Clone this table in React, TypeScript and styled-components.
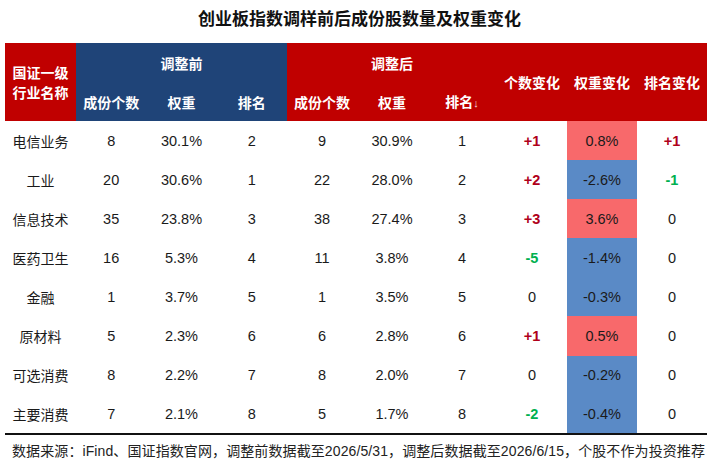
import React from "react";
import styled, { createGlobalStyle } from "styled-components";

const RED = "#C00000";
const NAVY = "#1F4478";
const UP = "#F8696B";
const DOWN = "#5A8AC6";

const rows = [
  { name: "电信业务", n0: 8, w0: "30.1%", r0: 2, n1: 9, w1: "30.9%", r1: 1, dn: "+1", dw: "0.8%", dr: "+1" },
  { name: "工业", n0: 20, w0: "30.6%", r0: 1, n1: 22, w1: "28.0%", r1: 2, dn: "+2", dw: "-2.6%", dr: "-1" },
  { name: "信息技术", n0: 35, w0: "23.8%", r0: 3, n1: 38, w1: "27.4%", r1: 3, dn: "+3", dw: "3.6%", dr: "0" },
  { name: "医药卫生", n0: 16, w0: "5.3%", r0: 4, n1: 11, w1: "3.8%", r1: 4, dn: "-5", dw: "-1.4%", dr: "0" },
  { name: "金融", n0: 1, w0: "3.7%", r0: 5, n1: 1, w1: "3.5%", r1: 5, dn: "0", dw: "-0.3%", dr: "0" },
  { name: "原材料", n0: 5, w0: "2.3%", r0: 6, n1: 6, w1: "2.8%", r1: 6, dn: "+1", dw: "0.5%", dr: "0" },
  { name: "可选消费", n0: 8, w0: "2.2%", r0: 7, n1: 8, w1: "2.0%", r1: 7, dn: "0", dw: "-0.2%", dr: "0" },
  { name: "主要消费", n0: 7, w0: "2.1%", r0: 8, n1: 5, w1: "1.7%", r1: 8, dn: "-2", dw: "-0.4%", dr: "0" },
];

const GlobalStyle = createGlobalStyle`
  html, body {
    margin: 0;
    padding: 0;
    background: #ffffff;
  }
  body {
    font-family: "Liberation Sans", "Noto Sans CJK SC", sans-serif;
    color: #1a1a1a;
  }
`;

const Page = styled.div`
  width: 719px;
  height: 463px;
  overflow: hidden;
  padding-top: 6px;
  box-sizing: border-box;
`;

const Title = styled.h1`
  margin: 0 0 13px;
  height: 24px;
  line-height: 24px;
  text-align: center;
  font-family: "Noto Sans CJK SC", sans-serif;
  font-size: 17px;
  font-weight: 700;
  color: #111;
`;

const Table = styled.table`
  margin-left: 5px;
  width: 702px;
  table-layout: fixed;
  border-collapse: collapse;
  border-bottom: 2px solid #111;
`;

const HeadCell = styled.th<{ $bg: string; $h?: number }>`
  background: ${(p) => p.$bg};
  color: #fff;
  font-family: "Noto Sans CJK SC", sans-serif;
  font-size: 14px;
  font-weight: 700;
  text-align: center;
  vertical-align: middle;
  padding: 0;
  height: ${(p) => (p.$h ? `${p.$h}px` : "auto")};
  line-height: 20px;
`;

const Arrow = styled.span`
  font-family: "Liberation Sans", sans-serif;
  font-size: 11px;
  font-weight: 400;
  opacity: 0.85;
`;

const Row = styled.tr`
  height: 39.1px;
`;

const Cell = styled.td`
  padding: 0;
  text-align: center;
  vertical-align: middle;
  font-size: 14.5px;
  color: #1a1a1a;
`;

const NameCell = styled(Cell)`
  font-family: "Noto Sans CJK SC", sans-serif;
  font-size: 14px;
`;

const DeltaCell = styled(Cell)<{ $tone: "up" | "down" | "flat" }>`
  font-weight: ${(p) => (p.$tone === "flat" ? 400 : 700)};
  color: ${(p) => (p.$tone === "up" ? "#B0001A" : p.$tone === "down" ? "#00B050" : "#1a1a1a")};
`;

const WeightCell = styled(Cell)<{ $up: boolean }>`
  background: ${(p) => (p.$up ? UP : DOWN)};
`;

const Footer = styled.p`
  margin: 5px 0 0 12px;
  font-family: "Noto Sans CJK SC", sans-serif;
  font-size: 14px;
  line-height: 20px;
  color: #222;
  white-space: nowrap;
  letter-spacing: 0.1px;
`;

const Digits = styled.span`
  font-family: "Liberation Sans", sans-serif;
`;

const tone = (v: string) => (v.startsWith("+") ? "up" : v.startsWith("-") ? "down" : "flat");

export default function App() {
  return (
    <>
      <GlobalStyle />
      <Page>
        <Title>创业板指数调样前后成份股数量及权重变化</Title>
        <Table>
          <colgroup>
            <col style={{ width: 71 }} />
            {Array.from({ length: 9 }).map((_, i) => (
              <col key={i} style={{ width: i < 3 ? 70.33 : 70 }} />
            ))}
          </colgroup>
          <thead>
            <tr>
              <HeadCell $bg={RED} rowSpan={2}>
                国证一级
                <br />
                行业名称
              </HeadCell>
              <HeadCell $bg={NAVY} colSpan={3} $h={40}>
                调整前
              </HeadCell>
              <HeadCell $bg={RED} colSpan={3} $h={40}>
                调整后
              </HeadCell>
              <HeadCell $bg={RED} rowSpan={2}>个数变化</HeadCell>
              <HeadCell $bg={RED} rowSpan={2}>权重变化</HeadCell>
              <HeadCell $bg={RED} rowSpan={2}>排名变化</HeadCell>
            </tr>
            <tr>
              <HeadCell $bg={NAVY} $h={38}>成份个数</HeadCell>
              <HeadCell $bg={NAVY}>权重</HeadCell>
              <HeadCell $bg={NAVY}>排名</HeadCell>
              <HeadCell $bg={RED}>成份个数</HeadCell>
              <HeadCell $bg={RED}>权重</HeadCell>
              <HeadCell $bg={RED}>
                排名<Arrow>↓</Arrow>
              </HeadCell>
            </tr>
          </thead>
          <tbody>
            {rows.map((r) => (
              <Row key={r.name}>
                <NameCell>{r.name}</NameCell>
                <Cell>{r.n0}</Cell>
                <Cell>{r.w0}</Cell>
                <Cell>{r.r0}</Cell>
                <Cell>{r.n1}</Cell>
                <Cell>{r.w1}</Cell>
                <Cell>{r.r1}</Cell>
                <DeltaCell $tone={tone(r.dn)}>{r.dn}</DeltaCell>
                <WeightCell $up={!r.dw.startsWith("-")}>{r.dw}</WeightCell>
                <DeltaCell $tone={tone(r.dr)}>{r.dr}</DeltaCell>
              </Row>
            ))}
          </tbody>
        </Table>
        <Footer>
          数据来源：<Digits>iFind</Digits>、国证指数官网，调整前数据截至<Digits>2026/5/31</Digits>
          ，调整后数据截至<Digits>2026/6/15</Digits>，个股不作为投资推荐
        </Footer>
      </Page>
    </>
  );
}
